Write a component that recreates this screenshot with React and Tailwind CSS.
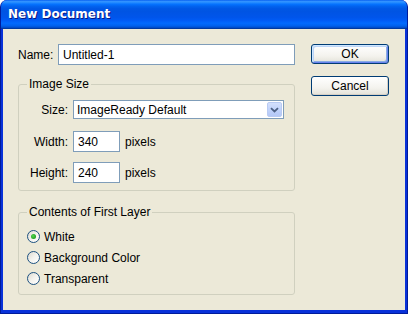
import React from 'react';

const font = { fontFamily: '"Liberation Sans", Arial, sans-serif' };

const Radio = ({ checked, label }) => (
    <label className="flex items-center h-[21px] gap-[4px]">
        <span className="w-[13px] h-[13px] rounded-full border border-[#1c5180] bg-[linear-gradient(135deg,#dcd9cf_0%,#f4f3ee_50%,#ffffff_100%)] flex items-center justify-center">
            {checked && <span className="w-[5px] h-[5px] rounded-full bg-[radial-gradient(circle_at_40%_40%,#55d551_0%,#21a121_70%,#1a8a1a_100%)]" />}
        </span>
        <span>{label}</span>
    </label>
);

const Button = ({ children, isDefault }) => (
    <button
        type="button"
        className={
            isDefault
                ? "w-[78px] h-[20px] rounded-[3px] border border-[#003c74] bg-[linear-gradient(to_bottom,#ffffff_0%,#f4f3ee_60%,#e3e1d8_100%)] shadow-[inset_1px_1px_0_#cee7ff,inset_-1px_-1px_0_#6982ee,inset_2px_2px_0_#bcd4f6,inset_-2px_-2px_0_#89ade4] text-black leading-none"
                : "w-[78px] h-[20px] rounded-[3px] border border-[#003c74] bg-[linear-gradient(to_bottom,#ffffff_0%,#f4f3ee_60%,#e3e1d8_100%)] shadow-[inset_-1px_-1px_0_#d6d0c5] text-black leading-none"
        }
    >
        {children}
    </button>
);

export default function App() {
    return (
        <div className="w-[408px] h-[314px] flex flex-col rounded-t-[7px] overflow-hidden bg-[#0831d9] border-x border-b border-[#001b9a]">
            {/* title bar */}
            <div className="h-[29px] shrink-0 flex items-center pl-[7px] bg-[linear-gradient(to_bottom,#0058ee_0%,#3593ff_4%,#288eff_8%,#127dff_12%,#036ffc_16%,#0262ee_22%,#0057e5_30%,#0054e3_40%,#0055eb_60%,#005bf5_70%,#026afe_80%,#0062ef_88%,#0052d6_94%,#0040ab_97%,#003092_100%)]">
                <span
                    className="text-white text-[12px] font-bold pb-[1px] [text-shadow:1px_1px_0_#0a1883]"
                    style={{ fontFamily: '"DejaVu Sans", Verdana, sans-serif' }}
                >
                    New Document
                </span>
            </div>

            {/* client area */}
            <div className="flex-1 mx-[2px] mb-[3px] bg-[#ece9d8] flex pl-[15px] pt-[15px] text-[12px] text-black" style={font}>
                <div className="w-[277px] flex flex-col">
                    <div className="flex items-center h-[21px]">
                        <span className="w-[40px]">Name:</span>
                        <input
                            type="text"
                            defaultValue="Untitled-1"
                            className="w-[237px] h-[21px] border border-[#7f9db9] bg-white px-[4px] outline-none"
                        />
                    </div>

                    <fieldset className="mt-[13px] border border-[#d0d0bf] rounded-[3px] pb-[7px]">
                        <legend className="ml-[8px] px-[2px] leading-[13px]">Image Size</legend>
                        <div className="grid grid-cols-[49px_auto] gap-x-[5px] pt-[9px] items-center">
                            <span className="text-right">Size:</span>
                            <div className="w-[211px] h-[19px] border border-[#7f9db9] bg-white flex items-center pl-[3px] pr-[1px]">
                                <span className="flex-1">ImageReady Default</span>
                                <span className="w-[15px] h-[15px] rounded-[2px] border border-[#b9cbf3] bg-[linear-gradient(to_bottom,#d4e0fd_0%,#c1d3fb_50%,#b4c8f6_100%)] flex items-center justify-center">
                                    <svg width="9" height="6" viewBox="0 0 9 6">
                                        <path d="M1 1.2 L4.5 4.5 L8 1.2" fill="none" stroke="#4d6185" strokeWidth="1.8" />
                                    </svg>
                                </span>
                            </div>

                            <span className="text-right mt-[12px]">Width:</span>
                            <div className="flex items-center mt-[12px] gap-[5px]">
                                <input type="text" defaultValue="340" className="w-[47px] h-[21px] border border-[#7f9db9] bg-white px-[4px] outline-none" />
                                <span>pixels</span>
                            </div>

                            <span className="text-right mt-[10px]">Height:</span>
                            <div className="flex items-center mt-[10px] gap-[5px]">
                                <input type="text" defaultValue="240" className="w-[47px] h-[21px] border border-[#7f9db9] bg-white px-[4px] outline-none" />
                                <span>pixels</span>
                            </div>
                        </div>
                    </fieldset>

                    <fieldset className="mt-[15px] border border-[#d0d0bf] rounded-[3px] pb-[5px]">
                        <legend className="ml-[8px] px-[2px] leading-[13px]">Contents of First Layer</legend>
                        <div className="pt-[7px] pl-[8px] flex flex-col">
                            <Radio checked label="White" />
                            <Radio label="Background Color" />
                            <Radio label="Transparent" />
                        </div>
                    </fieldset>
                </div>

                <div className="ml-[16px] flex flex-col gap-[12px]">
                    <Button isDefault>OK</Button>
                    <Button>Cancel</Button>
                </div>
            </div>
        </div>
    );
}
